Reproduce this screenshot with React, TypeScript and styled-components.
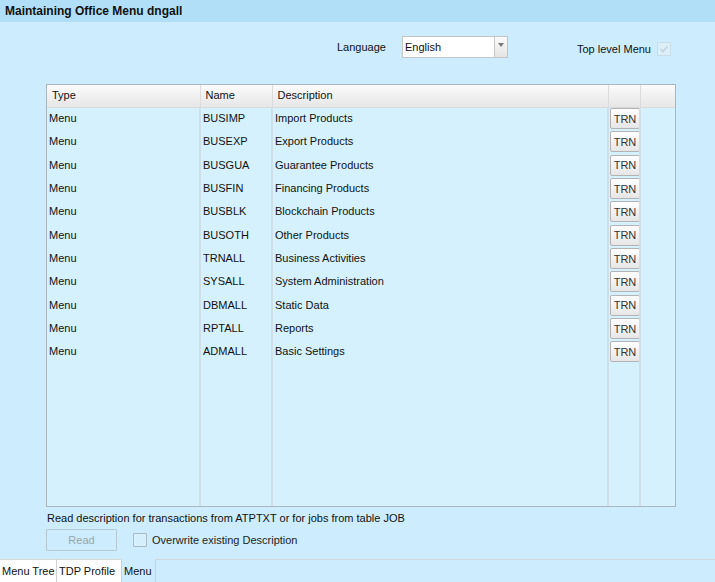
import React from 'react';
import styled, { createGlobalStyle } from 'styled-components';

const GlobalStyle = createGlobalStyle`
  html, body {
    margin: 0;
    padding: 0;
    background: #cdedfe;
  }
  * {
    box-sizing: border-box;
  }
`;

const Page = styled.div`
  width: 715px;
  height: 582px;
  display: flex;
  flex-direction: column;
  background: #cdedfe;
  font-family: 'Liberation Sans', Arial, sans-serif;
  font-size: 11px;
  color: #111;
  overflow: hidden;
`;

const TitleBar = styled.div`
  height: 22px;
  flex: none;
  display: flex;
  align-items: center;
  padding-left: 5px;
  background: #b2dff8;
  font-size: 12px;
  font-weight: bold;
  color: #111;
`;

const Content = styled.div`
  flex: 1;
  display: flex;
  flex-direction: column;
  padding: 14px 39px 0 46px;
`;

const OptionsRow = styled.div`
  height: 22px;
  display: flex;
  align-items: center;
`;

const Label = styled.span`
  margin-left: 291px;
  width: 65px;
`;

const SelectBox = styled.div`
  width: 106px;
  height: 22px;
  display: flex;
  border: 1px solid #c4c4c4;
  background: #fff;
`;

const SelectValue = styled.div`
  flex: 1;
  display: flex;
  align-items: center;
  padding-left: 2px;
  font-size: 11px;
`;

const SelectArrow = styled.div`
  width: 13px;
  border-left: 1px solid #c8c8c8;
  background: linear-gradient(#fafafa, #e4e4e4);
  display: flex;
  align-items: center;
  justify-content: center;
  &::after {
    content: '';
    border-left: 3px solid transparent;
    border-right: 3px solid transparent;
    border-top: 4px solid #777;
    margin-top: -4px;
  }
`;

const TopLevel = styled.label`
  margin-left: 69px;
  margin-top: 3px;
  display: flex;
  align-items: center;
  gap: 6px;
`;

const CheckBox = styled.span<{ $checked?: boolean }>`
  width: 14px;
  height: 14px;
  border: 1px solid ${(p) => (p.$checked ? '#c9dde8' : '#a8bcc8')};
  background: ${(p) => (p.$checked ? '#dceff9' : '#d6effc')};
  border-radius: 1px;
  display: inline-flex;
  align-items: center;
  justify-content: center;
`;

const Grid = styled.div`
  margin-top: 26px;
  width: 630px;
  height: 423px;
  border: 1px solid #a9b6bd;
  background: #d6f1fe;
  overflow: hidden;
`;

const Table = styled.table`
  width: 628px;
  border-collapse: collapse;
  table-layout: fixed;
`;

const HeadCell = styled.th`
  height: 22px;
  padding: 0 0 1px 5px;
  text-align: left;
  font-weight: normal;
  background: linear-gradient(#fbfbfb, #e6e6e6);
  border-right: 1px solid #dcdcdc;
  border-bottom: 1px solid #dadada;
  &:last-child {
    border-right: none;
  }
`;

const Cell = styled.td`
  height: 23.33px;
  padding: 0 0 1px 2px;
  border-right: 2px solid #cfdfe8;
  white-space: nowrap;
  overflow: hidden;
  &:last-child {
    border-right: none;
  }
`;

const TrnCell = styled(Cell)`
  padding: 0 0 0 1px;
`;

const TrnButton = styled.button`
  width: 30px;
  height: 21px;
  padding: 0;
  display: block;
  border: 1px solid #b3b3b3;
  border-radius: 2px;
  background: linear-gradient(#ffffff, #e6e6e6);
  font-family: inherit;
  font-size: 11px;
  color: #333;
`;

const Hint = styled.div`
  margin-top: 4px;
  height: 14px;
  line-height: 14px;
  padding-left: 1px;
`;

const ActionRow = styled.div`
  margin-top: 4px;
  display: flex;
  align-items: center;
  gap: 16px;
`;

const ReadButton = styled.button`
  width: 71px;
  height: 22px;
  border: 1px solid #b6c9d3;
  border-radius: 1px;
  background: #cdedfe;
  color: #9aa4aa;
  font-family: inherit;
  font-size: 11px;
`;

const CheckLabel = styled.label`
  display: flex;
  align-items: center;
  gap: 5px;
  color: #222;
`;

const TabBar = styled.div`
  flex: none;
  height: 23px;
  display: flex;
  align-items: stretch;
`;

const Tab = styled.div<{ $active?: boolean; $width: number }>`
  width: ${(p) => p.$width}px;
  padding-left: 2px;
  display: flex;
  align-items: center;
  font-size: 11px;
  white-space: nowrap;
  background: ${(p) => (p.$active ? '#cdedfe' : '#fff')};
  border-top: 1px solid ${(p) => (p.$active ? 'transparent' : '#d8d8d8')};
  border-right: 1px solid #d0d0d0;
`;

const TabFill = styled.div`
  flex: 1;
  border-top: 1px solid #d0d6da;
`;

type Row = { type: string; name: string; description: string };

const rows: Row[] = [
  { type: 'Menu', name: 'BUSIMP', description: 'Import Products' },
  { type: 'Menu', name: 'BUSEXP', description: 'Export Products' },
  { type: 'Menu', name: 'BUSGUA', description: 'Guarantee Products' },
  { type: 'Menu', name: 'BUSFIN', description: 'Financing Products' },
  { type: 'Menu', name: 'BUSBLK', description: 'Blockchain Products' },
  { type: 'Menu', name: 'BUSOTH', description: 'Other Products' },
  { type: 'Menu', name: 'TRNALL', description: 'Business Activities' },
  { type: 'Menu', name: 'SYSALL', description: 'System Administration' },
  { type: 'Menu', name: 'DBMALL', description: 'Static Data' },
  { type: 'Menu', name: 'RPTALL', description: 'Reports' },
  { type: 'Menu', name: 'ADMALL', description: 'Basic Settings' },
];

const emptyRows = Array.from({ length: 7 });

const Tick = () => (
  <svg width="10" height="10" viewBox="0 0 10 10">
    <path d="M1.5 5.2 L4 7.6 L8.6 2.2" fill="none" stroke="#c3d3dc" strokeWidth="1.6" />
  </svg>
);

export default function App() {
  return (
    <Page>
      <GlobalStyle />
      <TitleBar>Maintaining Office Menu dngall</TitleBar>
      <Content>
        <OptionsRow>
          <Label>Language</Label>
          <SelectBox>
            <SelectValue>English</SelectValue>
            <SelectArrow />
          </SelectBox>
          <TopLevel>
            Top level Menu
            <CheckBox $checked>
              <Tick />
            </CheckBox>
          </TopLevel>
        </OptionsRow>

        <Grid>
          <Table>
            <colgroup>
              <col style={{ width: 153 }} />
              <col style={{ width: 72 }} />
              <col style={{ width: 336 }} />
              <col style={{ width: 32 }} />
              <col style={{ width: 35 }} />
            </colgroup>
            <thead>
              <tr>
                <HeadCell>Type</HeadCell>
                <HeadCell>Name</HeadCell>
                <HeadCell>Description</HeadCell>
                <HeadCell />
                <HeadCell />
              </tr>
            </thead>
            <tbody>
              {rows.map((r) => (
                <tr key={r.name}>
                  <Cell>{r.type}</Cell>
                  <Cell>{r.name}</Cell>
                  <Cell>{r.description}</Cell>
                  <TrnCell>
                    <TrnButton>TRN</TrnButton>
                  </TrnCell>
                  <Cell />
                </tr>
              ))}
              {emptyRows.map((_, i) => (
                <tr key={i}>
                  <Cell />
                  <Cell />
                  <Cell />
                  <Cell />
                  <Cell />
                </tr>
              ))}
            </tbody>
          </Table>
        </Grid>

        <Hint>Read description for transactions from ATPTXT or for jobs from table JOB</Hint>

        <ActionRow>
          <ReadButton disabled>Read</ReadButton>
          <CheckLabel>
            <CheckBox />
            Overwrite existing Description
          </CheckLabel>
        </ActionRow>
      </Content>

      <TabBar>
        <Tab $width={57}>Menu Tree</Tab>
        <Tab $width={65}>TDP Profile</Tab>
        <Tab $width={34} $active>
          Menu
        </Tab>
        <TabFill />
      </TabBar>
    </Page>
  );
}
